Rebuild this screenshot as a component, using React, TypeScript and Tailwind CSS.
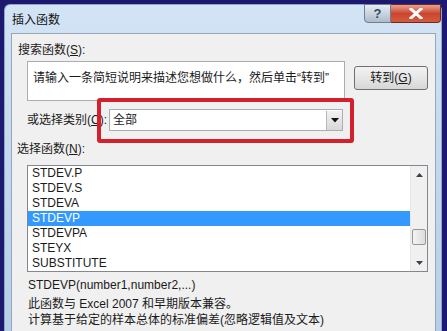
import React from "react";

const font = { fontFamily: '"Liberation Sans", "Noto Sans CJK SC", sans-serif' };

const items = ["STDEV.P", "STDEV.S", "STDEVA", "STDEVP", "STDEVPA", "STEYX", "SUBSTITUTE"];

export default function App() {
  return (
    <div className="w-[447px] h-[331px] overflow-hidden bg-[#1d1870] pt-[4px] pl-[4px] pr-[5px]" style={font}>
      <div className="h-[327px] rounded-t-[6px] bg-gradient-to-b from-[#d3e4f5] via-[#c2d8ee] to-[#b6cfe8] flex flex-col border-t border-l border-r border-[#8ea7c4]">
        {/* title bar */}
        <div className="h-[28px] flex items-start relative shrink-0">
          <div className="pl-[7px] pt-[7px] text-[12px] leading-[16px] text-[#111]">插入函数</div>
          <div className="ml-auto flex -mt-[1px]">
            <div className="w-[27px] h-[19px] rounded-bl-[4px] border border-[#6e7f93] bg-gradient-to-b from-[#e6edf5] via-[#c9d4df] to-[#aebbc9] flex items-center justify-center text-[13px] font-bold text-[#3a4a5c]">?</div>
            <div className="w-[50px] h-[19px] rounded-br-[4px] border border-[#6e2a22] border-l-0 bg-gradient-to-b from-[#e8a190] via-[#c9462e] to-[#d55a3e] flex items-center justify-center">
              <svg width="14" height="11" viewBox="0 0 14 11">
                <path d="M2 1 L12 10 M12 1 L2 10" stroke="#ffffff" strokeWidth="3" strokeLinecap="square" />
              </svg>
            </div>
          </div>
        </div>
        {/* panel */}
        <div className="relative flex-1 ml-[6px] mr-[5px] border border-[#98a6b6] border-b-0 bg-[#f0f0f0] text-[12px] text-[#1a1a1a] flex flex-col">
          <div className="mt-[8px] pl-[6px] h-[16px] leading-[16px]">搜索函数(<span className="underline">S</span>):</div>
          <div className="flex mt-[3px] ml-[15px]">
            <div className="w-[318px] h-[40px] bg-white border border-[#abadb3] pl-[5px] pt-[8px] leading-[16px]">请输入一条简短说明来描述您想做什么，然后单击“转到”</div>
            <div className="ml-[9px] mt-[5px] w-[74px] h-[24px] rounded-[3px] border border-[#707070] bg-gradient-to-b from-[#f2f2f2] via-[#e6e6e6] to-[#d6d6d6] flex items-center justify-center leading-[16px]">
              转到(<span className="underline">G</span>)
            </div>
          </div>
          <div className="flex items-center mt-[8px] ml-[15px] h-[22px]">
            <div className="w-[82px] leading-[16px]">或选择类别(<span className="underline">C</span>):</div>
            <div className="w-[234px] h-[22px] bg-white border border-[#abadb3] flex items-center pl-[3px] leading-[16px]">
              <span>全部</span>
              <div className="ml-auto w-[16px] h-[19px] mr-[0px] border-l border-[#b8b8b8] bg-gradient-to-b from-[#f2f2f2] to-[#d8d8d8] flex items-center justify-center">
                <svg width="8" height="5" viewBox="0 0 8 5"><path d="M0 0 H8 L4 4.5 Z" fill="#111" /></svg>
              </div>
            </div>
          </div>
          <div className="mt-[10px] pl-[5px] h-[16px] leading-[16px]">选择函数(<span className="underline">N</span>):</div>
          <div className="mt-[8px] ml-[15px] w-[401px] h-[107px] bg-white border border-[#828790] flex">
            <div className="flex-1 flex flex-col">
              {items.map((it) => (
                <div
                  key={it}
                  className={
                    "h-[15px] leading-[15px] pl-[4px] " +
                    (it === "STDEVP" ? "bg-[#3399ff] text-white" : "")
                  }
                >
                  {it}
                </div>
              ))}
            </div>
            <div className="w-[17px] bg-[#f0f0f0] border-l border-[#e8e8e8] flex flex-col items-center">
              <div className="h-[17px] flex items-center justify-center">
                <svg width="7" height="4" viewBox="0 0 7 4"><path d="M0 4 H7 L3.5 0 Z" fill="#404040" /></svg>
              </div>
              <div className="flex-1 w-full flex flex-col items-center">
                <div className="mt-[46px] w-[14px] h-[16px] rounded-[2px] border border-[#979797] bg-gradient-to-r from-[#f4f4f4] to-[#dcdcdc]" />
              </div>
              <div className="h-[17px] flex items-center justify-center">
                <svg width="7" height="4" viewBox="0 0 7 4"><path d="M0 0 H7 L3.5 4 Z" fill="#404040" /></svg>
              </div>
            </div>
          </div>
          <div className="mt-[5px] pl-[16px] h-[16px] leading-[16px]">STDEVP(number1,number2,...)</div>
          <div className="mt-[3px] pl-[16px] h-[16px] leading-[16px]">此函数与 Excel 2007 和早期版本兼容。</div>
          <div className="pl-[16px] h-[16px] leading-[16px]">计算基于给定的样本总体的标准偏差(忽略逻辑值及文本)</div>
          {/* red highlight */}
          <div className="absolute left-[85px] top-[64px] w-[257px] h-[45px] border-[4px] border-[#d4202c] rounded-[3px]" />
        </div>
      </div>
    </div>
  );
}
